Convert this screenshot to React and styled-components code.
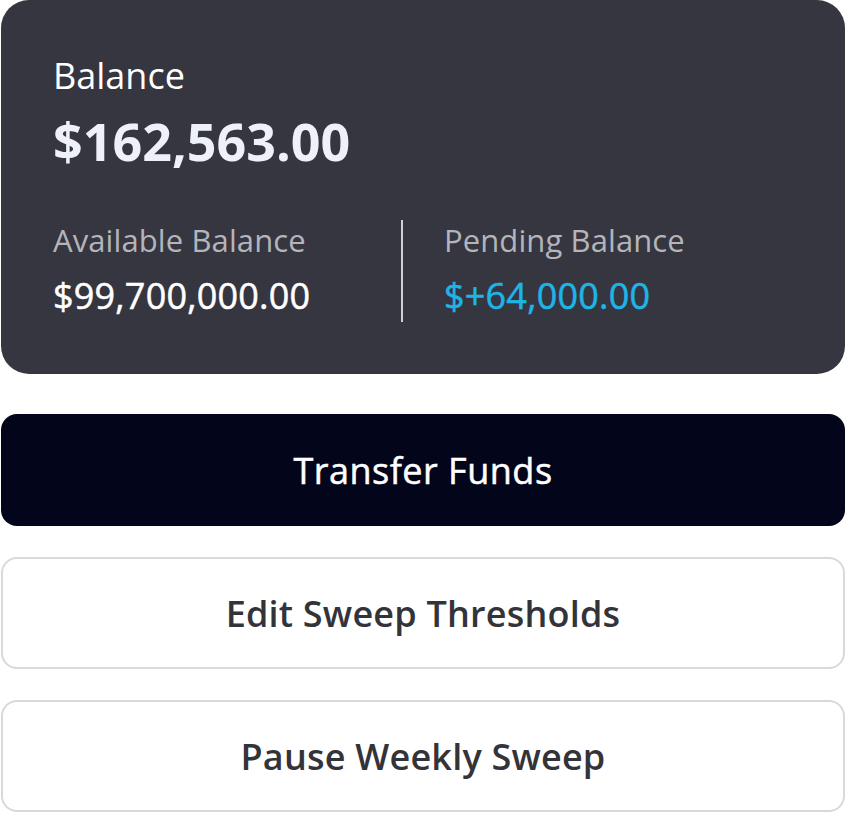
import styled, { createGlobalStyle } from 'styled-components'

const GlobalStyle = createGlobalStyle`
  html, body {
    margin: 0;
    padding: 0;
    background: #ffffff;
  }
  body {
    font-family: "Open Sans", "Noto Sans", sans-serif;
  }
`

const Page = styled.div`
  width: 846px;
  padding: 0 1px;
  box-sizing: border-box;
  display: flex;
  flex-direction: column;
`

const BalanceCard = styled.section`
  background: #363641;
  border-radius: 28px;
  padding: 52px 52px 52px;
  color: #ffffff;
  display: flex;
  flex-direction: column;
`

const Heading = styled.div`
  font-size: 36px;
  line-height: 48px;
  color: #ffffff;
`

const Total = styled.div`
  font-size: 52px;
  font-weight: 700;
  line-height: 66px;
  color: #eef1f7;
  margin-top: 8px;
`

const SubRow = styled.div`
  display: flex;
  margin-top: 46px;
`

const SubColumn = styled.div`
  flex: ${(p) => (p.$grow ? 1 : 'none')};
  width: ${(p) => p.$width || 'auto'};
  display: flex;
  flex-direction: column;
  gap: 12px;
  padding-bottom: 2px;
  padding-left: ${(p) => p.$inset || 0};
`

const SubLabel = styled.div`
  font-size: 31px;
  line-height: 40px;
  color: #b4b4bb;
  letter-spacing: 0.1px;
`

const Divider = styled.div`
  width: 2px;
  align-self: stretch;
  background: #cfcfd4;
`

const Amount = styled.div`
  font-size: 36px;
  line-height: 48px;
  font-weight: 400;
  letter-spacing: 0.2px;
  -webkit-text-stroke: 0.5px currentColor;
  color: ${(p) => p.$color || '#ffffff'};
`

const Actions = styled.div`
  display: flex;
  flex-direction: column;
  gap: 31px;
  margin-top: 40px;
`

const ActionButton = styled.button`
  height: 112px;
  border-radius: 16px;
  font-family: "Open Sans", "Noto Sans", sans-serif;
  font-size: 36px;
  font-weight: ${(p) => (p.$primary ? 400 : 600)};
  letter-spacing: ${(p) => (p.$primary ? '0.5px' : '0.2px')};
  -webkit-text-stroke: ${(p) => (p.$primary ? '0.5px currentColor' : '0')};
  cursor: pointer;
  background: ${(p) => (p.$primary ? '#03051a' : '#ffffff')};
  color: ${(p) => (p.$primary ? '#ffffff' : '#33343a')};
  border: ${(p) => (p.$primary ? 'none' : '2px solid #d9d9db')};
`

export default function App() {
  return (
    <Page>
      <GlobalStyle />
      <BalanceCard>
        <Heading>Balance</Heading>
        <Total>$162,563.00</Total>
        <SubRow>
          <SubColumn $width="348px">
            <SubLabel>Available Balance</SubLabel>
            <Amount>$99,700,000.00</Amount>
          </SubColumn>
          <Divider />
          <SubColumn $grow $inset="41px">
            <SubLabel>Pending Balance</SubLabel>
            <Amount $color="#1fb4e6">$+64,000.00</Amount>
          </SubColumn>
        </SubRow>
      </BalanceCard>
      <Actions>
        <ActionButton $primary>Transfer Funds</ActionButton>
        <ActionButton>Edit Sweep Thresholds</ActionButton>
        <ActionButton>Pause Weekly Sweep</ActionButton>
      </Actions>
    </Page>
  )
}
